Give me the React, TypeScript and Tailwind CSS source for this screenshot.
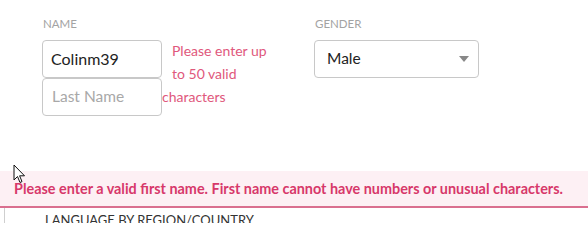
const font = "font-['Lato','Liberation_Sans',sans-serif]";

const Cursor = () => (
  <svg
    className="absolute left-[13px] top-[164px]"
    width="13"
    height="20"
    viewBox="0 0 13 20"
  >
    <path
      d="M1 1 L1 16 L4.5 12.5 L7 18.5 L9 17.6 L6.6 11.8 L11.5 11.8 Z"
      fill="#fff"
      stroke="#111"
      strokeWidth="1"
      strokeLinejoin="miter"
    />
  </svg>
);

const App = () => {
  return (
    <div className={`relative w-[588px] h-[249px] overflow-hidden bg-white ${font}`}>
      {/* Name / gender row */}
      <div className="flex pt-[16px] pl-[42px]">
        <div className="w-[272px]">
          <div className="pl-px text-[11.5px] leading-[16px] text-[#a3a3a3] mb-[8px]">NAME</div>
          <div className="flex">
            <div className="flex flex-col w-[120px]">
              <div className="h-[38px] rounded-[4px] border border-[#c8c8c8] flex items-center pl-[8px] text-[16px] text-[#222]">
                Colinm39
              </div>
              <div className="h-[38px] rounded-[4px] border border-[#c8c8c8] flex items-center pl-[9px] text-[15.5px] text-[#a8a8a8]">
                Last Name
              </div>
            </div>
            <div className="text-[14px] leading-[23px] text-[#e0587c] -mt-px">
              <div className="pl-[10px]">Please enter up</div>
              <div className="pl-[10px]">to 50 valid</div>
              <div>characters</div>
            </div>
          </div>
        </div>
        <div>
          <div className="pl-px text-[11.5px] leading-[16px] text-[#a3a3a3] mb-[8px]">GENDER</div>
          <div className="w-[165px] h-[38px] rounded-[4px] border border-[#c8c8c8] flex items-center justify-between pl-[12px] pr-[9px] text-[15.5px] text-[#222]">
            <span>Male</span>
            <svg width="10" height="6" viewBox="0 0 10 6">
              <path d="M0 0 L10 0 L5 6 Z" fill="#888" />
            </svg>
          </div>
        </div>
      </div>

      {/* Error banner */}
      <div className="mt-[55px] h-[37px] bg-[#fdf0f4] border-b-2 border-[#da6f8f] flex items-center pl-[14px]">
        <span className="text-[14.4px] font-bold text-[#d7386a]">
          Please enter a valid first name. First name cannot have numbers or unusual characters.
        </span>
      </div>

      {/* Next section, clipped */}
      <div className="ml-[4px] h-[15px] overflow-hidden border-l border-[#cfcfcf]">
        <div className="pl-[40px] pt-[4px] text-[13px] leading-[16px] text-[#333] uppercase">
          Language by region/country
        </div>
      </div>

      <Cursor />
    </div>
  );
};

export default App;
